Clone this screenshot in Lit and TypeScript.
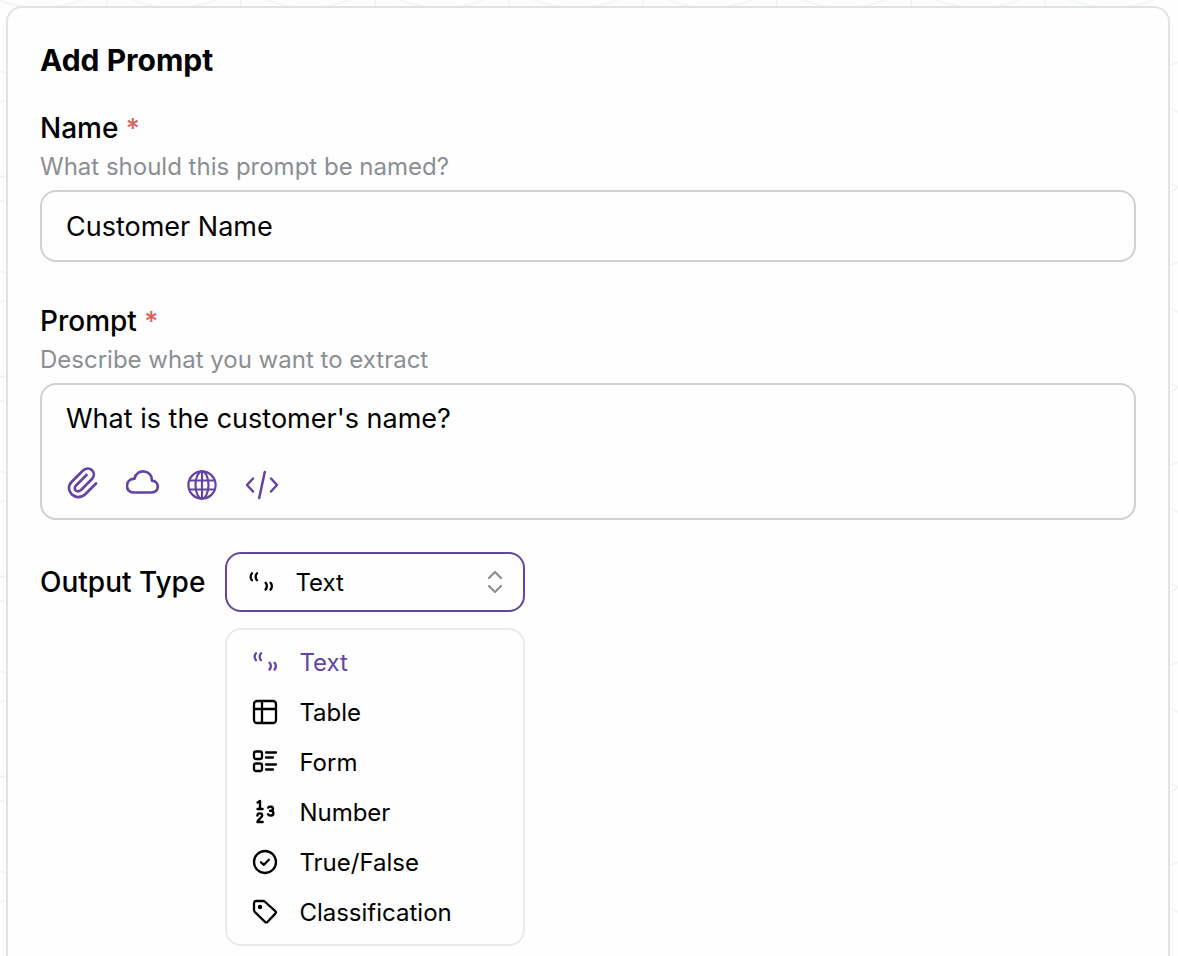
import { LitElement, html, css } from "lit";
import { customElement, state } from "lit/decorators.js";

const icons: Record<string, unknown> = {
  text: html`<svg class="icon" viewBox="0 0 28 28" aria-hidden="true" fill="none" stroke="currentColor" stroke-width="2.300" stroke-linecap="round">
    <path d="M5 5.200C3.200 7 3.200 10.600 4.900 12.200M10 5.200C8.200 7 8.200 10.600 9.900 12.200"/>
    <path d="M18.600 14.800C20.300 16.400 20.300 19.800 18.500 21.600M23.600 14.800C25.300 16.400 25.300 19.800 23.500 21.600"/>
  </svg>`,
  table: html`<svg class="icon" viewBox="0 0 28 28" aria-hidden="true" fill="none" stroke="currentColor" stroke-width="2.3">
    <rect x="3" y="3" width="22" height="22" rx="3"/><path d="M3 11h22M11 3v22"/>
  </svg>`,
  form: html`<svg class="icon" viewBox="0 0 28 28" aria-hidden="true" fill="none" stroke="currentColor" stroke-width="2.300" stroke-linecap="round">
    <rect x="3" y="3.500" width="8" height="7.500" rx="2"/><rect x="3" y="15.500" width="8" height="7.500" rx="2"/>
    <path d="M15 4.500h10M15 9.500h7M15 16.500h10M15 21.500h7"/>
  </svg>`,
  number: html`<svg class="icon" viewBox="0 0 28 28" aria-hidden="true" fill="none" stroke="currentColor" stroke-width="2.400" stroke-linecap="round" stroke-linejoin="round">
    <path d="M6.600 4.600L9 3v8M6.600 11h5"/>
    <path d="M6.400 17.600c0-3 4.800-3 4.800 0 0 2-4.600 4.200-4.800 6.400h5.200"/>
    <path d="M17.200 9.600c1-1.400 4.800-1.400 4.800 1.100 0 1.700-1.600 2.100-3 2.100 1.600 0 3.400.4 3.400 2.400 0 2.900-4.400 2.900-5.400 1"/>
  </svg>`,
  bool: html`<svg class="icon" viewBox="0 0 28 28" aria-hidden="true" fill="none" stroke="currentColor" stroke-width="2.3" stroke-linecap="round" stroke-linejoin="round">
    <circle cx="14" cy="14" r="11"/><path d="M10 14.300l2.900 2.500 5-5"/>
  </svg>`,
  tag: html`<svg class="icon" viewBox="0 0 28 28" aria-hidden="true" fill="none" stroke="currentColor" stroke-width="2.3" stroke-linejoin="round">
    <path d="M3 5.500Q3 3 5.500 3H12Q13.200 3 14.200 4L24.300 13.100Q25.600 14.300 24.300 15.600L16.600 23.800Q15.300 25 14 23.800L4 14.200Q3 13.200 3 12Z"/>
    <circle cx="9" cy="9" r="2.200" fill="currentColor" stroke="none"/>
  </svg>`,
};

const options = [
  { id: "text", label: "Text" },
  { id: "table", label: "Table" },
  { id: "form", label: "Form" },
  { id: "number", label: "Number" },
  { id: "bool", label: "True/False" },
  { id: "tag", label: "Classification" },
];

const tools = [
  { label: "Attach file", icon: html`<svg class="tool-icon" viewBox="2 0 36 36" aria-hidden="true" fill="none" stroke="currentColor" stroke-width="2.700" stroke-linecap="round" stroke-linejoin="round">
    <path d="M32 17.500L21.500 28C12 37 -0.500 24.500 7.500 16L19 4.500C25.500 -1 33.500 6.500 28 13L17 24C12.800 27.500 8.500 23 12 19.500L22.500 9"/></svg>` },
  { label: "Cloud source", icon: html`<svg class="tool-icon" viewBox="2 0 36 36" aria-hidden="true" fill="none" stroke="currentColor" stroke-width="2.700" stroke-linejoin="round">
    <path d="M9.500 26.500H27.500C35.500 26.500 36 15.500 28 14.700C28.500 3.500 12.500 2 10.500 12.700C0.800 13 0.500 26.500 9.500 26.500Z"/></svg>` },
  { label: "Web source", icon: html`<svg class="tool-icon" viewBox="2 0 36 36" aria-hidden="true" fill="none" stroke="currentColor" stroke-width="2.200">
    <circle cx="18" cy="19" r="13.600"/><ellipse cx="18" cy="19" rx="6.500" ry="13.600"/><path d="M18 5.400v27.200M6 14.500h24M6 23.500h24"/></svg>` },
  { label: "Insert code", icon: html`<svg class="tool-icon" viewBox="2 0 36 36" aria-hidden="true" fill="none" stroke="currentColor" stroke-width="2.500" stroke-linecap="round" stroke-linejoin="round">
    <path d="M9 12.500L3 19l6 6.500M27 12.500L33 19l-6 6.500M20.800 6l-5.600 26"/></svg>` },
];

@customElement("app-root")
export class AppRoot extends LitElement {
  static styles = css`
    :host {
      display: flex;
      position: relative;
      box-sizing: border-box;
      min-height: 100vh;
      padding: 6px 8px 0 6px;
      overflow: hidden;
      background: #fefefe;
      color: #000;
      font-family: Inter, "Liberation Sans", sans-serif;
    }
    * { box-sizing: border-box; }
    .pattern { position: absolute; inset: 0; width: 100%; height: 100%; }
    .card {
      position: relative;
      flex: 1;
      min-width: 0;
      display: flex;
      flex-direction: column;
      padding: 32px;
      border: 2px solid #dfe3e5;
      border-bottom: 0;
      border-radius: 16px 16px 0 0;
      background: #fefefe;
    }
    h1 { margin: 0 0 28px; font-size: 30px; line-height: 40px; font-weight: 700; }
    .field { display: flex; flex-direction: column; }
    .field + .field { margin-top: 39px; }
    .label { font-size: 28px; line-height: 40px; font-weight: 500; }
    .required { color: #d9635b; font-size: 27px; line-height: 1; }
    .hint { margin: 0 0 4px; font-size: 24px; line-height: 38px; color: #8b8f94; }
    .box {
      width: 100%;
      border: 2px solid #cdd2d4;
      border-radius: 16px;
      background: #fefefe;
    }
    .entry { color: inherit; font-family: inherit; font-size: 27px; line-height: 40px; outline: none; }
    input.entry { height: 72px; padding: 0 24px; }
    textarea.entry { display: block; width: 100%; height: 40px; padding: 0; border: 0; background: none; resize: none; overflow: hidden; }
    .composer { padding: 14px 24px 16px; }
    .tools { display: flex; gap: 24px; margin-top: 27px; }
    .tool { display: flex; padding: 0; border: 0; background: none; color: #6344a6; cursor: pointer; }
    .tool-icon { width: 36px; height: 36px; }
    .output { display: flex; align-items: center; gap: 20px; margin-top: 32px; }
    .picker { position: relative; width: 300px; }
    .trigger {
      display: flex;
      align-items: center;
      height: 60px;
      padding: 0 18px 0 20px;
      border: 2px solid #63479c;
      border-radius: 16px;
      background: #fefefe;
    }
    .icon { flex: none; width: 28px; height: 28px; }
    .trigger select {
      flex: 1;
      min-width: 0;
      height: 100%;
      margin: 0;
      padding: 0 0 0 20px;
      border: 0;
      outline: none;
      appearance: none;
      background: none;
      color: inherit;
      font-family: inherit;
      font-size: 24px;
      cursor: pointer;
    }
    .chevrons { flex: none; width: 20px; height: 28px; color: #8b9094; }
    .menu {
      position: absolute;
      top: 76px;
      left: 0;
      width: 100%;
      margin: 0;
      padding: 7px 0;
      border: 2px solid #e9eaec;
      border-radius: 16px;
      background: #fefefe;
      list-style: none;
    }
    .option {
      display: flex;
      align-items: center;
      gap: 20px;
      width: 100%;
      height: 50px;
      padding: 0 24px;
      border: 0;
      background: none;
      color: inherit;
      font-family: inherit;
      font-size: 24px;
      text-align: left;
      cursor: pointer;
    }
    .option.selected { color: #6344ad; }
  `;

  @state() private selected = "text";
  @state() private open = true;

  private toggle(e: Event) {
    e.preventDefault();
    this.open = !this.open;
  }

  private choose(id: string) {
    this.selected = id;
    this.open = false;
  }

  render() {
    return html`
      <svg class="pattern" aria-hidden="true">
        <defs>
          <pattern id="waves" width="134" height="200" patternUnits="userSpaceOnUse" x="-27" y="0">
            <path d="M0 -13V62M134 -13V62M0 187V200M134 187V200M0 62Q67 92 134 62M0 112Q67 82 134 112M0 187Q67 157 134 187M0 187Q67 229 134 187M0 -13Q67 29 134 -13" fill="none" stroke="#f4f5f7" stroke-width="2"/>
          </pattern>
        </defs>
        <rect width="100%" height="100%" fill="url(#waves)"/>
      </svg>
      <main class="card">
        <h1>Add Prompt</h1>
        <div class="field">
          <label class="label" for="name">Name <span class="required">*</span></label>
          <p class="hint" id="name-hint">What should this prompt be named?</p>
          <input class="box entry" id="name" type="text" required aria-describedby="name-hint" .value=${"Customer Name"} />
        </div>
        <div class="field">
          <label class="label" for="prompt">Prompt <span class="required">*</span></label>
          <p class="hint" id="prompt-hint">Describe what you want to extract</p>
          <div class="box composer">
            <textarea class="entry" id="prompt" rows="1" required aria-describedby="prompt-hint" .value=${"What is the customer's name?"}></textarea>
            <div class="tools">
              ${tools.map((t) => html`<button class="tool" type="button" aria-label=${t.label}>${t.icon}</button>`)}
            </div>
          </div>
        </div>
        <div class="output">
          <label class="label" for="type">Output Type</label>
          <div class="picker">
            <div class="trigger" @mousedown=${this.toggle}>
              ${icons[this.selected]}
              <select id="type" .value=${this.selected} @change=${(e: Event) => this.choose((e.target as HTMLSelectElement).value)}>
                ${options.map((o) => html`<option value=${o.id} ?selected=${o.id === this.selected}>${o.label}</option>`)}
              </select>
              <svg class="chevrons" viewBox="0 0 20 28" aria-hidden="true" fill="none" stroke="currentColor" stroke-width="2.200" stroke-linecap="round" stroke-linejoin="round"><path d="M4 10l6-6 6 6M4 18l6 6 6-6"/></svg>
            </div>
            ${this.open ? html`<ul class="menu" aria-label="Output Type">
              ${options.map((o) => html`<li><button type="button" class=${o.id === this.selected ? "option selected" : "option"} @click=${() => this.choose(o.id)}>${icons[o.id]}<span>${o.label}</span></button></li>`)}
            </ul>` : null}
          </div>
        </div>
      </main>
    `;
  }
}
